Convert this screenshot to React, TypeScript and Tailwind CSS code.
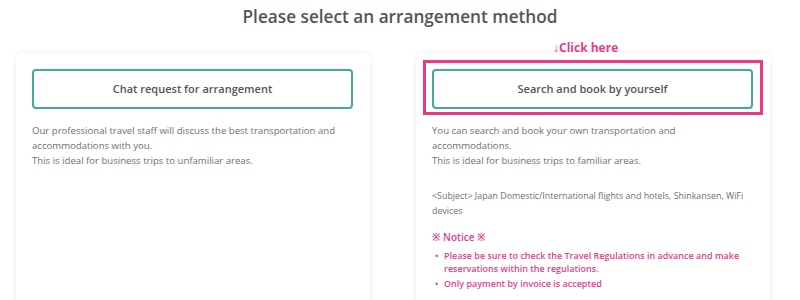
import React from "react";

export default function App() {
  return (
    <div
      className="w-[800px] h-[300px] overflow-hidden bg-white"
      style={{ fontFamily: '"Open Sans", "Noto Sans", sans-serif' }}
    >
      <h1 className="pt-[5px] text-center text-[17.2px] leading-[24px] font-semibold text-[#555555]">
        Please select an arrangement method
      </h1>
      <div className="mt-[24px] flex gap-[46px] pl-[16px]">
        <div className="w-[354px] h-[270px] rounded-[6px] bg-white shadow-[0_0_6px_rgba(0,0,0,0.08)] p-[16px]">
          <button className="w-[321px] h-[40px] rounded-[4px] border-2 border-[#46a89b] bg-white text-[11px] font-semibold text-[#555555]">
            Chat request for arrangement
          </button>
          <p className="mt-[14px] text-[9.6px] leading-[15px] text-[#707070]">
            Our professional travel staff will discuss the best transportation and accommodations with you.
            <br />
            This is ideal for business trips to unfamiliar areas.
          </p>
        </div>
        <div className="w-[354px] h-[270px] rounded-[6px] bg-white shadow-[0_0_6px_rgba(0,0,0,0.08)] p-[16px]">
          <div className="relative w-[321px] h-[40px]">
            <span className="absolute left-[121px] top-[-30px] whitespace-nowrap text-[12px] leading-[17px] font-bold text-[#ea3d87]">
              ↓Click here
            </span>
            <span className="absolute -left-[9px] -right-[10px] -top-[9px] -bottom-[6px] border-[3px] border-[#e93b85]" />
            <button className="relative w-[321px] h-[40px] rounded-[4px] border-2 border-[#46a89b] bg-white text-[11px] font-semibold text-[#555555]">
              Search and book by yourself
            </button>
          </div>
          <p className="mt-[14px] text-[9.6px] leading-[15px] text-[#707070] pr-[60px]">
            You can search and book your own transportation and accommodations.
            <br />
            This is ideal for business trips to familiar areas.
          </p>
          <p className="mt-[20px] text-[8.9px] leading-[15px] text-[#707070]">
            &lt;Subject&gt; Japan Domestic/International flights and hotels, Shinkansen, WiFi devices
          </p>
          <p className="mt-[12px] text-[10px] leading-[15px] font-semibold text-[#e3418a]">
            ※ Notice ※
          </p>
          <ul className="mt-[4px] text-[9px] leading-[13px] font-semibold text-[#e3418a]">
            <li className="mb-[2px] flex">
              <span className="w-[12px] shrink-0 pl-[3px]">•</span>
              <span>Please be sure to check the Travel Regulations in advance and make reservations within the regulations.</span>
            </li>
            <li className="flex">
              <span className="w-[12px] shrink-0 pl-[3px]">•</span>
              <span>Only payment by invoice is accepted</span>
            </li>
          </ul>
        </div>
      </div>
    </div>
  );
}
